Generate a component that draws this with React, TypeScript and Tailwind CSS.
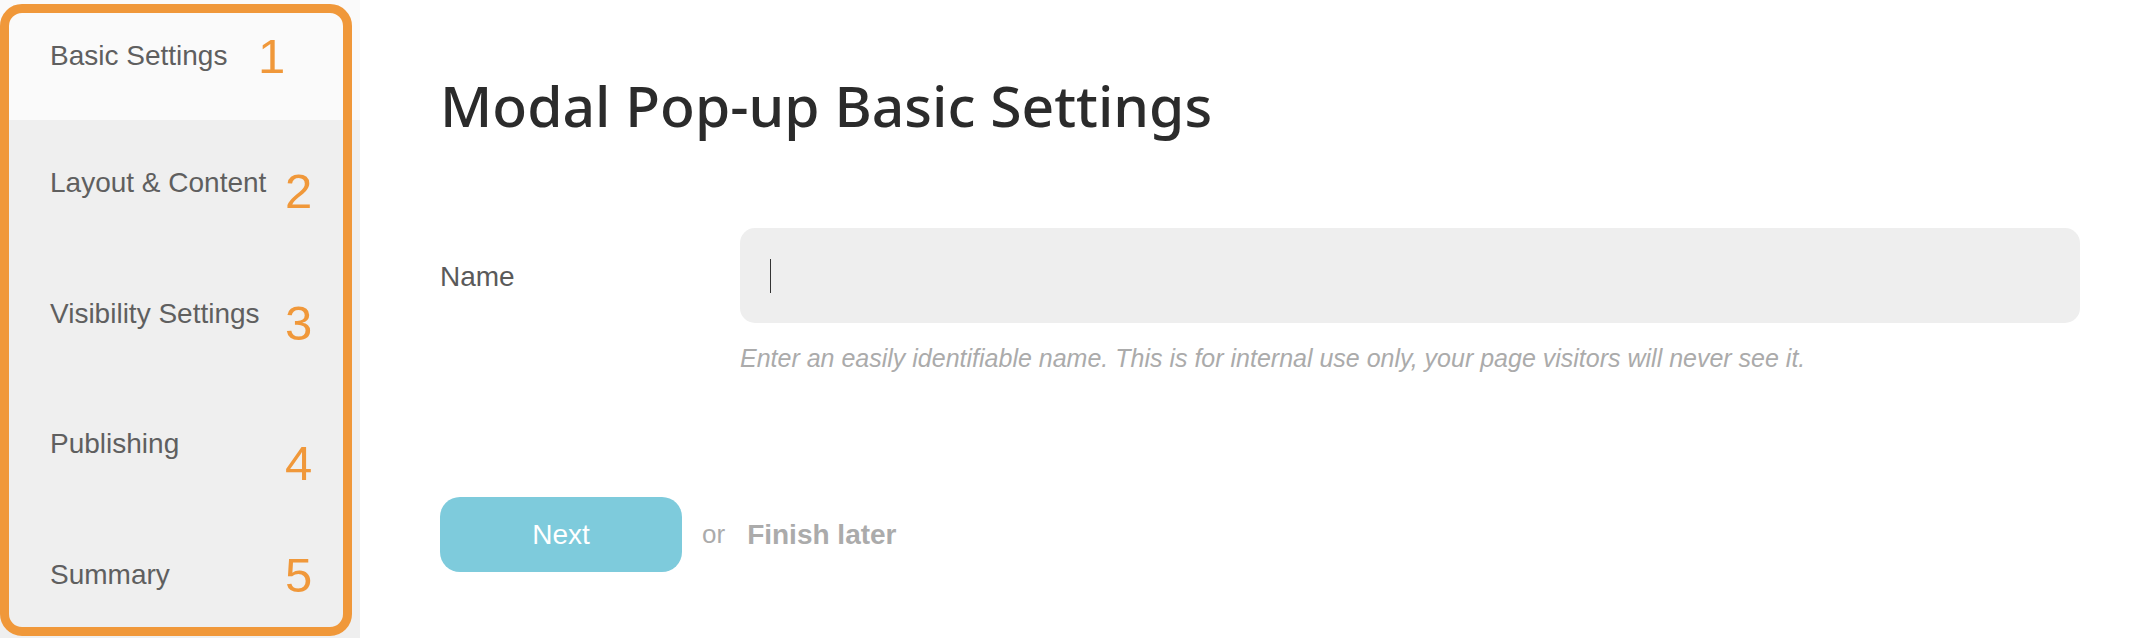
const STEPS = ["Basic Settings", "Layout & Content", "Visibility Settings", "Publishing", "Summary"];

// orange annotation digits drawn over the sidebar: [label, left, top]
const MARKS: [string, number, number][] = [
  ["1", 258, 32],
  ["2", 285, 167],
  ["3", 285, 299],
  ["4", 285, 439],
  ["5", 285, 551],
];

const sans = { fontFamily: '"Liberation Sans", Arial, sans-serif' };

function Sidebar() {
  return (
    <aside className="relative h-[638px] w-[360px] shrink-0 overflow-hidden bg-[#efefef]" style={sans}>
      <div className="flex flex-col">
        {STEPS.map((step, i) => (
          <div
            key={step}
            className={i === 0 ? "h-[120px] shrink-0 bg-[#fafafa] pl-[50px] pt-[40px]" : "h-[130.5px] shrink-0 pl-[50px] pt-[47px]"}
          >
            <span className="text-[28px] leading-[32px] text-[#5f5f5f]">{step}</span>
          </div>
        ))}
      </div>
      <div className="pointer-events-none absolute left-0 top-[4px] h-[632px] w-[352px] rounded-[22px] border-[9px] border-[#f0983a]" />
      {MARKS.map(([n, left, top]) => (
        <span
          key={n}
          className="pointer-events-none absolute text-[49px] leading-none text-[#f0983a]"
          style={{ left, top }}
        >
          {n}
        </span>
      ))}
    </aside>
  );
}

export default function App() {
  return (
    <div className="flex h-[638px] w-[2150px] overflow-hidden bg-white">
      <Sidebar />
      <main className="flex-1 pl-[80px] pr-[70px]" style={sans}>
        <h1
          className="mt-[70px] text-[57px] font-medium leading-[70px] text-[#2b2b2b]"
          style={{ fontFamily: '"Noto Sans", "Open Sans", sans-serif' }}
        >
          Modal Pop-up Basic Settings
        </h1>

        <div className="mt-[88px] flex items-center">
          <label className="w-[300px] shrink-0 pt-[3px] text-[28px] leading-[32px] text-[#5a5a5a]">Name</label>
          <div className="flex h-[95px] flex-1 items-center rounded-[15px] bg-[#eeeeee] pl-[30px]">
            <span className="h-[34px] w-px bg-[#333]" />
          </div>
        </div>
        <p className="ml-[300px] mt-[20px] text-[25px] italic leading-[30px] text-[#ababab]">
          Enter an easily identifiable name. This is for internal use only, your page visitors will never see it.
        </p>

        <div className="mt-[124px] flex items-center">
          <button className="h-[75px] w-[242px] rounded-[20px] bg-[#7ecbdc] text-[28px] text-white">Next</button>
          <span className="ml-[20px] text-[26px] text-[#ababab]">or</span>
          <a className="ml-[22px] text-[28px] font-bold text-[#ababab]">Finish later</a>
        </div>
      </main>
    </div>
  );
}
